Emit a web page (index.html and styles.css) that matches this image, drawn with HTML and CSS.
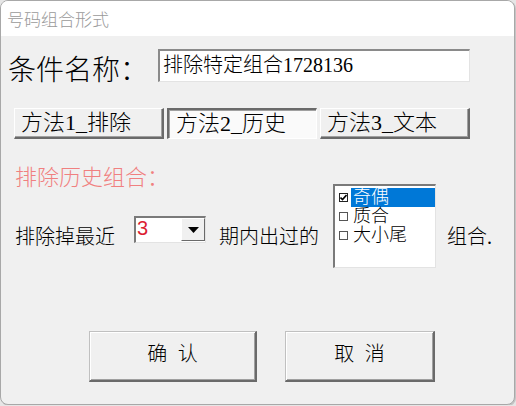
FILE: index.html
```html
<!DOCTYPE html>
<html lang="zh-CN">
<head>
    <meta charset="UTF-8">
    <title>号码组合形式</title>
    <link rel="stylesheet" href="styles.css">
</head>
<body>
    <div class="window">
        <div class="titlebar">号码组合形式</div>
        <div class="content">
            <div class="name-row">
                <span class="name-label">条件名称：</span>
                <div class="textbox">排除特定组合1728136</div>
            </div>
            <div class="tabs">
                <button class="tab">方法1_排除</button>
                <button class="tab active">方法2_历史</button>
                <button class="tab">方法3_文本</button>
            </div>
            <div class="history">
                <div class="history-main">
                    <div class="section-title">排除历史组合：</div>
                    <div class="recent">
                        <span class="text">排除掉最近</span>
                        <div class="combo">
                            <span class="combo-value">3</span>
                            <span class="combo-btn">
                                <svg width="11" height="6" viewBox="0 0 11 6"><path d="M0 0H11L5.5 6Z" fill="#000"/></svg>
                            </span>
                        </div>
                        <span class="text">期内出过的</span>
                    </div>
                </div>
                <div class="listbox">
                    <div class="item selected">
                        <span class="check checked">
                            <svg width="7" height="7" viewBox="0 0 7 7"><path d="M0.5 3.5L2.5 5.5L6.5 1" stroke="#000" stroke-width="1.6" fill="none"/></svg>
                        </span>
                        <span class="item-text">奇偶</span>
                    </div>
                    <div class="item">
                        <span class="check"></span>
                        <span class="item-text">质合</span>
                    </div>
                    <div class="item">
                        <span class="check"></span>
                        <span class="item-text">大小尾</span>
                    </div>
                </div>
                <span class="text tail">组合.</span>
            </div>
            <div class="actions">
                <button class="btn">确 认</button>
                <button class="btn">取 消</button>
            </div>
        </div>
    </div>
</body>
</html>
```

FILE: styles.css
```css
body {
    margin: 0;
    background-color: #e6e6e6;
    font-family: "Liberation Serif", "Noto Sans CJK SC", serif;
    font-weight: 300;
    color: #000;
}
.window {
    width: 515px;
    height: 405px;
    box-sizing: border-box;
    border: 1px solid #a8a8a8;
    border-radius: 8px;
    background-color: #f0f0f0;
    overflow: hidden;
    box-shadow: 1px 1px 0 #c4c4c4;
}
.titlebar {
    height: 35px;
    background: #fff;
    padding-left: 6px;
    font-family: "Noto Sans CJK SC", sans-serif;
    font-size: 17px;
    line-height: 36px;
    color: #9a9a9a;
}
.content {
    padding: 0 7px;
}
.name-row {
    display: flex;
    align-items: flex-start;
    margin-top: 13px;
}
.name-label {
    width: 150px;
    font-size: 28px;
    line-height: 33px;
    margin-top: 5px;
}
.textbox {
    width: 312px;
    height: 33px;
    box-sizing: border-box;
    background: #fff;
    border-style: solid;
    border-width: 2px 1px 1px 2px;
    border-color: #8a8a8a #e3e3e3 #e3e3e3 #8a8a8a;
    padding-left: 3px;
    font-size: 20px;
    line-height: 28px;
}
.tabs {
    display: flex;
    gap: 3px;
    margin-top: 21px;
    margin-left: 6px;
}
.tab {
    width: 150px;
    height: 31px;
    box-sizing: border-box;
    text-align: left;
    padding: 0 0 0 6px;
    font-family: "Liberation Serif", "Noto Sans CJK SC", serif;
    font-weight: 300;
    font-size: 22px;
    line-height: 26px;
    background: #f0f0f0;
    border-style: solid;
    border-width: 1px 2px 2px 1px;
    border-color: #fff #6a6a6a #6a6a6a #fff;
    box-shadow: inset -1px -1px 0 #a0a0a0;
}
.tab.active {
    background: #fafafa;
    border-width: 2px 1px 1px 2px;
    border-color: #6a6a6a #fff #fff #6a6a6a;
    box-shadow: inset 1px 1px 0 #a0a0a0;
    padding-left: 7px;
}
.history {
    display: flex;
    align-items: flex-start;
    margin-top: 26px;
    margin-left: 7px;
}
.section-title {
    font-size: 22px;
    line-height: 26px;
    color: #f08080;
}
.recent {
    display: flex;
    align-items: flex-start;
    margin-top: 25px;
}
.text {
    font-size: 20px;
    line-height: 22px;
    margin-top: 10px;
}
.combo {
    display: flex;
    justify-content: space-between;
    width: 72px;
    height: 27px;
    box-sizing: border-box;
    margin: 0 13px 0 19px;
    background: #fff;
    border-style: solid;
    border-width: 2px 1px 1px 2px;
    border-color: #7a7a7a #e3e3e3 #e3e3e3 #7a7a7a;
}
.combo-value {
    font-family: "Liberation Sans", sans-serif;
    font-weight: 400;
    font-size: 20px;
    line-height: 20px;
    color: #dc1e32;
    padding-left: 1px;
}
.combo-btn {
    display: flex;
    align-items: center;
    justify-content: center;
    width: 24px;
    height: 23px;
    box-sizing: border-box;
    background: #f0f0f0;
    border-style: solid;
    border-width: 1px;
    border-color: #fff #6a6a6a #6a6a6a #fff;
}
.listbox {
    width: 103px;
    height: 84px;
    box-sizing: border-box;
    margin: 19px 0 0 14px;
    padding: 2px 0 0 2px;
    background: #fff;
    border-style: solid;
    border-width: 2px 1px 1px 2px;
    border-color: #7a7a7a #e3e3e3 #e3e3e3 #7a7a7a;
}
.item {
    display: flex;
    align-items: center;
    height: 19px;
}
.check {
    display: flex;
    align-items: center;
    justify-content: center;
    width: 9px;
    height: 9px;
    box-sizing: border-box;
    border: 1px solid #555;
    background: #fff;
    margin: 0 3px 0 2px;
}
.check.checked {
    border-color: #222;
}
.item-text {
    flex: 1;
    height: 19px;
    padding-left: 2px;
    font-size: 18px;
    line-height: 19px;
}
.item.selected .item-text {
    background: #0078d7;
    color: #fff;
}
.tail {
    margin-left: 11px;
    margin-top: 61px;
}
.actions {
    display: flex;
    gap: 28px;
    margin-top: 63px;
    margin-left: 81px;
}
.btn {
    width: 168px;
    height: 51px;
    box-sizing: border-box;
    padding-bottom: 9px;
    font-family: "Noto Sans CJK SC", sans-serif;
    font-weight: 300;
    font-size: 20px;
    word-spacing: 6px;
    background: #f0f0f0;
    border-style: solid;
    border-width: 1px 2px 2px 1px;
    border-color: #c0c0c0 #6a6a6a #6a6a6a #c0c0c0;
    box-shadow: inset 1px 1px 0 #fff, inset -1px -1px 0 #a0a0a0;
}
.btn + .btn {
    width: 150px;
}
```
